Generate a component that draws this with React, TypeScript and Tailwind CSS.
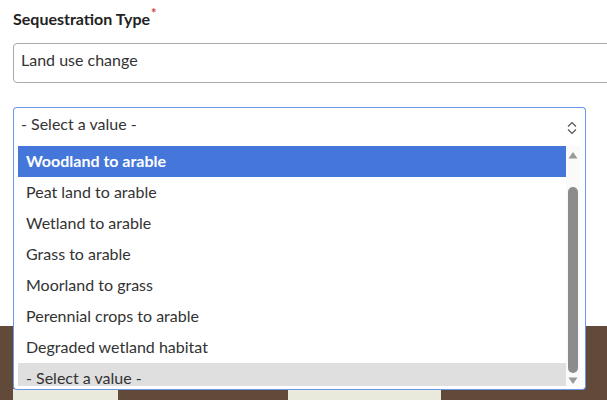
import React from "react";

const items = [
  "Woodland to arable",
  "Peat land to arable",
  "Wetland to arable",
  "Grass to arable",
  "Moorland to grass",
  "Perennial crops to arable",
  "Degraded wetland habitat",
  "- Select a value -",
];

export default function App() {
  return (
    <div
      className="relative w-[607px] h-[400px] overflow-hidden bg-white text-[#333]"
      style={{ fontFamily: "Lato, 'Open Sans', sans-serif" }}
    >
      <div className="pl-[13px] pt-[9px]">
        <div className="text-[16px] font-bold text-[#222] leading-[20px] flex">
          <span>Sequestration Type</span>
          <span className="text-[#d0453a] text-[13px] leading-[13px] ml-[1px] -mt-[2px]">*</span>
        </div>
        <div className="mt-[14px] h-[40px] w-[620px] border border-[#aaa] rounded-[4px] pl-[7px] pt-[6px] text-[16px] leading-[19px]">
          Land use change
        </div>
        <div className="relative mt-[24px] w-[573px] h-[39px] border border-b-0 border-[#6b97ea] rounded-t-[4px] flex items-start justify-between pl-[7px] pr-[7px] pt-[6px] text-[16px] leading-[19px] z-10 bg-white">
          <span>- Select a value -</span>
          <svg width="12" height="14" viewBox="0 0 12 14" className="mt-[7px]">
            <path d="M2 5.5 L6 1.5 L10 5.5" fill="none" stroke="#555" strokeWidth="1.2" />
            <path d="M2 8.5 L6 12.5 L10 8.5" fill="none" stroke="#555" strokeWidth="1.2" />
          </svg>
          <div className="absolute left-[-1px] top-full w-[573px] h-[244px] bg-white border border-t-0 border-[#6b97ea] rounded-b-[4px] pl-[4px] pr-[5px] pb-[3px] flex overflow-hidden">
            <div className="flex-1 h-[240px] overflow-hidden">
              {items.map((t, i) => (
                <div
                  key={t}
                  className={
                    "h-[31px] pl-[8px] pt-[5px] text-[16px] leading-[19px] " +
                    (i === 0
                      ? "bg-[#4477d9] text-white font-bold"
                      : i === items.length - 1
                      ? "bg-[#dfdfdf] pt-[4px]"
                      : "")
                  }
                >
                  {t}
                </div>
              ))}
            </div>
            <div className="w-[14px] h-[240px] bg-[#fafafa] flex flex-col items-center">
              <svg width="10" height="8" viewBox="0 0 10 8" className="mt-[5px]">
                <path d="M0.5 7.5 L5 1 L9.5 7.5 Z" fill="#999" />
              </svg>
              <div className="mt-[28px] w-[10px] h-[186px] rounded-full bg-[#8c8c8c]" />
              <svg width="10" height="8" viewBox="0 0 10 8" className="mt-[4px]">
                <path d="M0.5 0.5 L5 7 L9.5 0.5 Z" fill="#999" />
              </svg>
            </div>
          </div>
        </div>
      </div>
      <div className="absolute left-0 top-[326px] w-[607px] h-[74px] bg-[#614a39]">
        <div className="mt-[63px] flex">
          <div className="ml-[13px] w-[105px] h-[20px] bg-[#e9e9dc]" />
          <div className="ml-[170px] w-[153px] h-[20px] bg-[#e9e9dc]" />
        </div>
      </div>
    </div>
  );
}
